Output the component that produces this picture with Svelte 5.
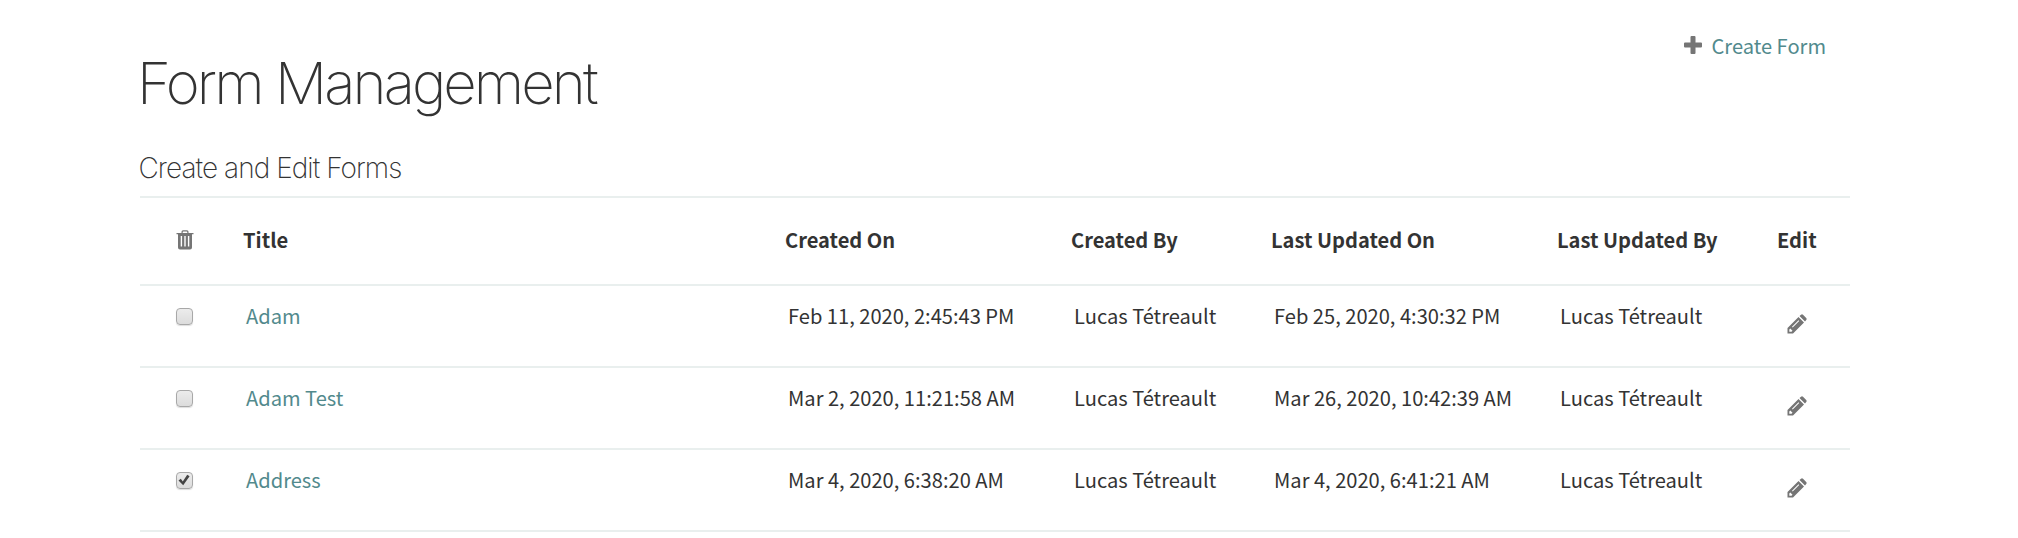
<script>
  const headings = ['Title', 'Created On', 'Created By', 'Last Updated On', 'Last Updated By'];
  const forms = [
    { title: 'Adam', created: 'Feb 11, 2020, 2:45:43 PM', by: 'Lucas Tétreault', updated: 'Feb 25, 2020, 4:30:32 PM', checked: false },
    { title: 'Adam Test', created: 'Mar 2, 2020, 11:21:58 AM', by: 'Lucas Tétreault', updated: 'Mar 26, 2020, 10:42:39 AM', checked: false },
    { title: 'Address', created: 'Mar 4, 2020, 6:38:20 AM', by: 'Lucas Tétreault', updated: 'Mar 4, 2020, 6:41:21 AM', checked: true }
  ];
</script>

<main>
  <header>
    <h1>Form Management</h1>
    <a class="create" href="#create">
      <svg class="plus" viewBox="0 0 18 18" aria-hidden="true"><path d="M7.5 0h3q1 0 1 1v5.500h5.500q1 0 1 1v3q0 1-1 1h-5.500v5.500q0 1-1 1h-3q-1 0-1-1v-5.500h-5.500q-1 0-1-1v-3q0-1 1-1h5.500v-5.500q0-1 1-1z" /></svg>
      <span>Create Form</span>
    </a>
  </header>
  <h2>Create and Edit Forms</h2>
  <div class="table" role="table">
    <div class="row head" role="row">
      <div class="mark">
        <svg class="trash" viewBox="0 0 18 20" aria-hidden="true">
          <path fill-rule="evenodd" d="M5.500 3V1.800Q5.500 .3 7 .3h4q1.500 0 1.500 1.500V3H17.500v1.300H16v13.200q0 2-2 2H4q-2 0-2-2V4.300H.5V3zM6.700 3h4.600V2.200q0-.7-.7-.7H7.400q-.7 0-.7.7zM4.700 6v10.500h1.400V6zM8.300 6v10.500h1.400V6zM11.900 6v10.500h1.400V6z" />
        </svg>
      </div>
      {#each headings as h}<div>{h}</div>{/each}
      <div class="edit">Edit</div>
    </div>
    {#each forms as f}
      <div class="row" role="row">
        <div class="mark">
          <span class="box" role="checkbox" aria-checked={f.checked} tabindex="0">
            {#if f.checked}<svg viewBox="0 0 14 14" aria-hidden="true"><path d="M1.500 7.400L3.800 5.700L5.800 8.400L10.200 1.700L12.600 3.300L6.200 12.300Z" /></svg>{/if}
          </span>
        </div>
        <div><a href="#form">{f.title}</a></div>
        <div>{f.created}</div>
        <div>{f.by}</div>
        <div>{f.updated}</div>
        <div>{f.by}</div>
        <div class="edit">
          <svg class="pencil" viewBox="0 0 20 20" aria-hidden="true">
            <path fill-rule="evenodd" d="M.5 19.500V14L11.500 3L17 8.500L6 19.500zM2.300 15.500v2.200h2.200l1-1l-2.200-2.200zM5 12.700l.7.7l6.500-6.500l-.7-.7z" />
            <path d="M12.500 2L14 .7q1-.9 2 0L19.200 4q.9 1 0 2L18 7.500z" />
          </svg>
        </div>
      </div>
    {/each}
  </div>
</main>

<style>
  :global(body) { background: #fff; }
  main {
    box-sizing: border-box;
    width: 1710px;
    height: 538px;
    margin-left: 140px;
    color: #333;
    font-family: "Noto Sans CJK SC", "Open Sans", sans-serif;
    font-size: 20.1px;
    line-height: 30px;
  }
  header { display: flex; justify-content: space-between; height: 142px; }
  h1, h2 { margin: 0; font-family: Inter, sans-serif; white-space: nowrap; }
  h1 { padding-top: 48px; margin-left: -3px; font-size: 58px; font-weight: 230; line-height: 70px; letter-spacing: -2.9px; }
  h2 { height: 54px; margin-left: -1.5px; font-size: 28px; font-weight: 220; line-height: 52px; letter-spacing: -.95px; }
  a { color: #528a8d; text-decoration: none; }
  .create { display: flex; gap: 10px; padding: 31px 24px 0 0; height: 30px; }
  svg { display: block; fill: #757575; }
  .plus { width: 18px; height: 18px; margin-top: 5px; }
  .row {
    display: grid;
    grid-template-columns: 103px 542px 286px 200px 286px 220px 73px;
    height: 80px;
    border-bottom: 2px solid #e9efee;
    white-space: nowrap;
  }
  .row > div { padding-top: 15px; }
  .row:not(.head) > div:not(.mark):not(.edit) { padding-left: 3px; }
  .head { height: 86px; border-top: 2px solid #e9efee; font-weight: 700; }
  .head > div { padding-top: 27px; }
  .row > .mark { padding-left: 36px; }
  .trash { width: 18px; height: 20px; margin-top: 5px; }
  .box {
    display: block;
    box-sizing: border-box;
    width: 17px;
    height: 17px;
    margin-top: 7px;
    border: 1px solid #a8a8a8;
    border-radius: 4px;
    background: linear-gradient(#ececec, #dcdcdc);
    box-shadow: 0 1px 1px #0002;
  }
  .box svg { width: 14px; height: 14px; fill: #444; }
  .pencil { width: 20px; height: 20px; margin: 13px 0 0 10px; }
</style>
